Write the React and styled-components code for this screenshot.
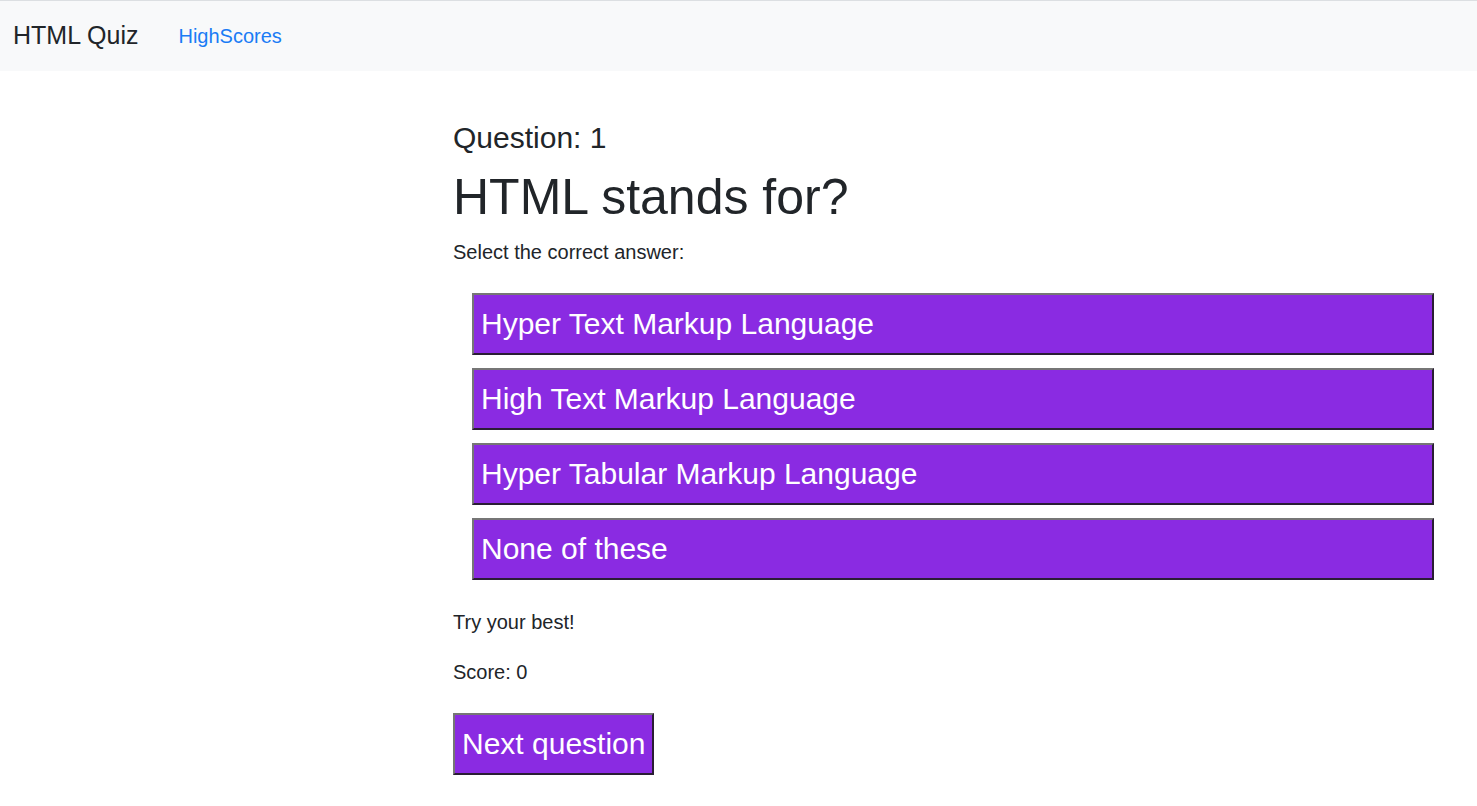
import React, { useState } from 'react';
import styled, { createGlobalStyle } from 'styled-components';

const GlobalStyle = createGlobalStyle`
  * { box-sizing: border-box; }
  body {
    margin: 0;
    background: #fff;
    color: #212529;
    font-family: "Liberation Sans", Arial, sans-serif;
    font-size: 20px;
    line-height: 1.5;
  }
`;

const Navbar = styled.nav`
  display: flex;
  align-items: center;
  height: 71px;
  padding: 0 15px 0 13px;
  background: #f8f9fa;
  border-top: 1px solid #dcdfe2;
`;

const Brand = styled.a`
  font-size: 25px;
  color: #212529;
  text-decoration: none;
  margin-right: 40px;
`;

const NavLink = styled.a`
  font-size: 20px;
  color: #1a7cf5;
  text-decoration: none;
`;

const Main = styled.main`
  padding: 49px 43px 30px 453px;
`;

const QuestionNo = styled.h4`
  margin: 0 0 11px;
  font-size: 30px;
  font-weight: 400;
  line-height: 1.2;
`;

const Title = styled.h1`
  margin: 0 0 10px;
  font-size: 50px;
  font-weight: 400;
  line-height: 1.2;
`;

const Text = styled.p`
  margin: 0 0 ${({ $gap }) => $gap}px;
  font-size: 20px;
  line-height: 30px;
`;

const Answers = styled.div`
  display: flex;
  flex-direction: column;
  gap: 13px;
  margin: 0 0 27px 19px;
`;

const QuizButton = styled.button`
  display: block;
  width: ${({ $full }) => ($full ? '100%' : 'auto')};
  height: 62px;
  padding: 0 7px;
  text-align: left;
  font-family: "Liberation Sans", Arial, sans-serif;
  font-size: 30px;
  line-height: 58px;
  color: #fff;
  background: #8a2be2;
  border: 2px solid;
  border-color: #767676 #2a1d35 #2a1d35 #767676;
  cursor: pointer;
`;

const answers = [
  'Hyper Text Markup Language',
  'High Text Markup Language',
  'Hyper Tabular Markup Language',
  'None of these',
];

export default function App() {
  const [score] = useState(0);

  return (
    <>
      <GlobalStyle />
      <Navbar>
        <Brand href="#">HTML Quiz</Brand>
        <NavLink href="#highscores">HighScores</NavLink>
      </Navbar>
      <Main>
        <QuestionNo>Question: 1</QuestionNo>
        <Title>HTML stands for?</Title>
        <Text $gap={26}>Select the correct answer:</Text>
        <Answers>
          {answers.map((a) => (
            <QuizButton key={a} $full>{a}</QuizButton>
          ))}
        </Answers>
        <Text $gap={20}>Try your best!</Text>
        <Text $gap={26}>Score: {score}</Text>
        <QuizButton>Next question</QuizButton>
      </Main>
    </>
  );
}
